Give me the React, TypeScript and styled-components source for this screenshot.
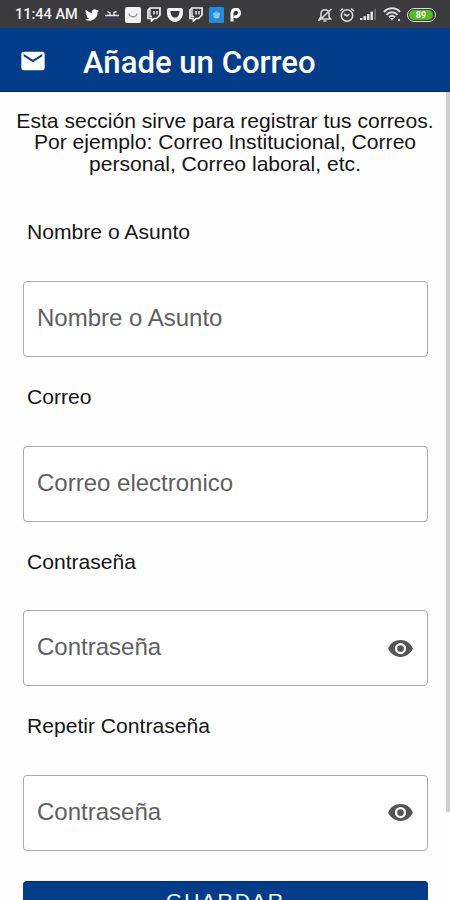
import React from "react";
import styled, { createGlobalStyle } from "styled-components";

const GlobalStyle = createGlobalStyle`
  * { box-sizing: border-box; }
  html, body { margin: 0; padding: 0; background: #fff; overflow: hidden; }
`;

const Screen = styled.div`
  width: 450px;
  height: 900px;
  overflow: hidden;
  display: flex;
  flex-direction: column;
  background: #fefefe;
  color: #141414;
  font-family: "Liberation Sans", Arial, sans-serif;
`;

const StatusBar = styled.div`
  height: 28px;
  flex: none;
  display: flex;
  align-items: center;
  justify-content: space-between;
  padding: 1px 14px 0 15px;
  background: #3b3b3e;
  color: #f2f2f2;
`;

const StatusGroup = styled.div<{ $gap: number }>`
  display: flex;
  align-items: center;
  gap: ${(p) => p.$gap}px;
  svg { display: block; flex: none; }
`;

const Clock = styled.span`
  font: 500 14.5px/26px Roboto, sans-serif;
  width: 64px;
  padding-top: 1px;
  white-space: nowrap;
`;

const Battery = styled.div`
  width: 29px;
  height: 14px;
  padding: 1px;
  border: 1px solid #dcdcdc;
  border-radius: 7px;
`;

const BatteryFill = styled.div`
  height: 10px;
  width: 24px;
  border-radius: 5px;
  background: #55bd1d;
  color: #fff;
  font: 700 9px/10px Roboto, sans-serif;
  text-align: center;
`;

const AppBar = styled.header`
  height: 64px;
  flex: none;
  display: flex;
  align-items: center;
  padding: 2px 0 0 19px;
  background: #033d89;
  border-bottom: 1px solid #02266c;
`;

const Title = styled.h1`
  margin: 4px 0 0 36px;
  font: 500 31.1px/40px Roboto, sans-serif;
  color: #fff;
  white-space: nowrap;
`;

const Body = styled.div`
  flex: 1;
  min-height: 0;
  display: flex;
  justify-content: space-between;
`;

const Form = styled.main`
  width: 445px;
  padding-top: 18px;
`;

const Intro = styled.p`
  margin: 0 0 46px 5px;
  width: 440px;
  font-size: 21.1px;
  line-height: 21.4px;
  text-align: center;
  white-space: nowrap;
`;

const ScrollThumb = styled.div`
  width: 4px;
  height: 720px;
  background: #d0d0d0;
`;

const Field = styled.section`
  height: 164.67px;
  padding-left: 23px;
`;

const Label = styled.label`
  display: block;
  height: 60.7px;
  padding-left: 4px;
  font-size: 21.1px;
  line-height: 24px;
`;

const InputBox = styled.div`
  width: 405px;
  height: 76px;
  display: flex;
  align-items: center;
  justify-content: space-between;
  padding: 0 13px 2px;
  border: 1px solid #a9a9a9;
  border-radius: 4px;
  background: #fff;
  color: #606060;
  font-size: 24px;
  line-height: 28px;

  svg { margin-top: 2px; }
`;

const SubmitButton = styled.button`
  display: block;
  width: 405px;
  height: 44px;
  margin: 1.8px 0 0 23px;
  padding: 0 0 5px;
  border: 0;
  border-top: 1px solid #02266c;
  border-radius: 4px;
  background: #033d89;
  color: #fff;
  font: 400 21px/30px "Liberation Sans", Arial, sans-serif;
  letter-spacing: 2px;
`;

const MailIcon = ({ size }: { size: number }) => (
  <svg width={size} height={size} viewBox="0 0 24 24" fill="#fff">
    <path d="M20 4H4a2 2 0 0 0-2 2v12a2 2 0 0 0 2 2h16a2 2 0 0 0 2-2V6a2 2 0 0 0-2-2zm0 4-8 5-8-5V6l8 5 8-5z" />
  </svg>
);

const EyeIcon = () => (
  <svg width="27" height="27" viewBox="0 0 24 24" fill="#555">
    <path d="M12 4.5C7 4.5 2.73 7.61 1 12c1.73 4.39 6 7.5 11 7.5s9.27-3.11 11-7.5C21.27 7.61 17 4.5 12 4.5zM12 17a5 5 0 1 1 0-10 5 5 0 0 1 0 10zm0-8a3 3 0 1 0 0 6 3 3 0 0 0 0-6z" />
  </svg>
);

const TwitterIcon = () => (
  <svg width="14" height="14" viewBox="0 0 24 24" fill="#fff">
    <path d="M24 4.6a10 10 0 0 1-2.8.8 5 5 0 0 0 2.1-2.7 10 10 0 0 1-3.1 1.2 4.9 4.9 0 0 0-8.4 4.5A14 14 0 0 1 1.7 3.2a4.9 4.9 0 0 0 1.5 6.5 5 5 0 0 1-2.2-.6v.1a4.9 4.9 0 0 0 4 4.8 5 5 0 0 1-2.3.1 4.9 4.9 0 0 0 4.6 3.4A10 10 0 0 1 0 19.5a14 14 0 0 0 21.5-12.4A10 10 0 0 0 24 4.6z" />
  </svg>
);

const SquiggleIcon = () => (
  <svg width="14" height="10" viewBox="0 0 14 10" fill="none" stroke="#e8e8f2" strokeWidth="1.4">
    <path d="M2.5 1.500 5 3v2.500H0M11.500 1.500 9 2.500v3H14M5 5.500h4" />
    <path d="M0 8h14" stroke="#47406f" />
  </svg>
);

const PocketIcon = () => (
  <svg width="16" height="16" viewBox="0 0 16 16">
    <rect width="16" height="16" rx="2" fill="#f2f2f2" />
    <path d="M4 6.5c.7 4.3 7.3 4.3 8 0" fill="none" stroke="#8b8b8b" strokeWidth="1.3" />
  </svg>
);

const TwitchIcon = () => (
  <svg width="14" height="15" viewBox="0 0 14 15">
    <path d="M3 1h10v7l-3.5 3.5H7L4.500 14v-2.500H1V3z" fill="none" stroke="#f4f4f4" strokeWidth="1.7" />
    <path d="M3 2v7.500h2M7 4v3.500M10 4v3.500" fill="none" stroke="#f4f4f4" strokeWidth="1.4" />
  </svg>
);

const CupIcon = () => (
  <svg width="16" height="14" viewBox="0 0 16 14">
    <path fillRule="evenodd" fill="#f6f6f6" d="M2 0h12q2 0 2 2v3c0 5-4 9-8 9S0 10 0 5V2Q0 0 2 0zm1.500 3c0 4 1.500 6.500 4.500 6.500s4.500-2.500 4.500-6.500z" />
  </svg>
);

const BlueAppIcon = () => (
  <svg width="15" height="16" viewBox="0 0 15 16">
    <rect width="15" height="16" rx="1" fill="#218bdd" />
    <circle cx="7.5" cy="8" r="3.5" fill="#68b9ee" />
    <path d="m4.500 6.500 3 2 3-2M5.500 10h4" fill="none" stroke="#b4e0fa" />
  </svg>
);

const ParkingIcon = () => (
  <svg width="11" height="14" viewBox="0 0 11 14">
    <path d="M2 13.500V5.500C2 0 9.500 0 9.500 4.700c0 4-4 4.500-5.500 3.500" fill="none" stroke="#fff" strokeWidth="3" />
  </svg>
);

const MutedBell = () => (
  <svg width="16" height="16" viewBox="0 0 16 16" fill="none" stroke="#dadada" strokeWidth="1.6">
    <path d="M2.500 12h11L12 10V6.500C11.500 1.500 4.500 1.500 4 6.500V10zM6.500 14h3M1.500 14 14.500 2" />
  </svg>
);

const AlarmIcon = () => (
  <svg width="16" height="16" viewBox="0 0 16 16" fill="none" stroke="#dadada" strokeWidth="1.6">
    <circle cx="8" cy="8.5" r="5.7" />
    <path d="M1 4 4 1.500M12 1.500 15 4M5 7l3 2 2.500-2" />
  </svg>
);

const SignalIcon = () => (
  <svg width="17" height="13" viewBox="0 0 17 13" fill="#e0e0e0">
    <path d="M0 10h2.500v2H0zM3.500 8H6v4H3.500zM7 6h2.500v6H7zM10.500 3.500H13V12h-2.500z" />
    <path d="M14.500 1H16v11h-1.500z" fill="#77777b" />
  </svg>
);

const WifiIcon = () => (
  <svg width="19" height="15" viewBox="0 0 19 15">
    <path d="M1 5c4.500-5 12-5 16 0M3.500 7.800c3-3.400 8-3.400 11 0M6 10.300c2-2 4-2 6 0" fill="none" stroke="#dedede" strokeWidth="2" />
    <path d="m7 11 2 2.500 2-2.500zM15 12h2v2h-2z" fill="#dedede" />
  </svg>
);

const fields = [
  { label: "Nombre o Asunto", placeholder: "Nombre o Asunto" },
  { label: "Correo", placeholder: "Correo electronico" },
  { label: "Contraseña", placeholder: "Contraseña", secret: true },
  { label: "Repetir Contraseña", placeholder: "Contraseña", secret: true },
];

export default function App() {
  return (
    <Screen>
      <GlobalStyle />
      <StatusBar>
        <StatusGroup $gap={6}>
          <Clock>11:44 AM</Clock>
          <TwitterIcon />
          <SquiggleIcon />
          <PocketIcon />
          <TwitchIcon />
          <CupIcon />
          <TwitchIcon />
          <BlueAppIcon />
          <ParkingIcon />
        </StatusGroup>
        <StatusGroup $gap={5.5}>
          <MutedBell />
          <AlarmIcon />
          <SignalIcon />
          <WifiIcon />
          <Battery><BatteryFill>89</BatteryFill></Battery>
        </StatusGroup>
      </StatusBar>
      <AppBar>
        <MailIcon size={28} />
        <Title>Añade un Correo</Title>
      </AppBar>
      <Body>
        <Form>
          <Intro>
            Esta sección sirve para registrar tus correos.<br />
            Por ejemplo: Correo Institucional, Correo<br />
            personal, Correo laboral, etc.
          </Intro>
          {fields.map((field) => (
            <Field key={field.label}>
              <Label>{field.label}</Label>
              <InputBox>
                <span>{field.placeholder}</span>
                {field.secret && <EyeIcon />}
              </InputBox>
            </Field>
          ))}
          <SubmitButton>GUARDAR</SubmitButton>
        </Form>
        <ScrollThumb />
      </Body>
    </Screen>
  );
}
